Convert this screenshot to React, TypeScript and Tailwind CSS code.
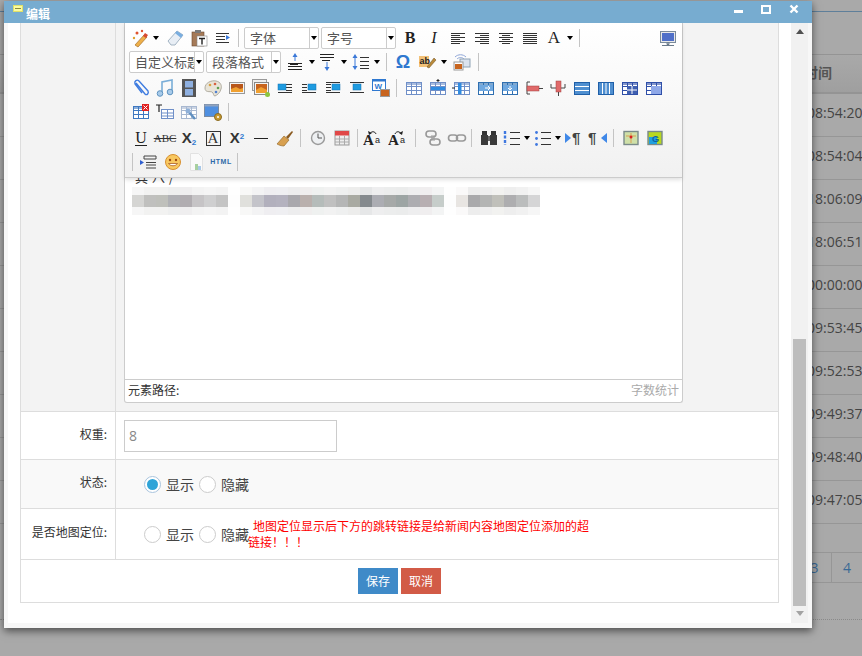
import type { ReactNode } from "react";

const blurBlocks = ["#d5d5d3","#c0c0be","#bfc0bb","#b0b1b5","#b1adb1","#c6c4c6","#cfcfd0","#c4c4c4","#fdfdfd","#e0e0dc","#c4c4ca","#b2b0bd","#b4b2bf","#a9a8ad","#bab0ad","#b5bcba","#c0c0c0","#b5b6b6","#a9aaa2","#858a8e","#acadb3","#a6a9a8","#9da5a4","#adadb1","#b8afb2","#c6cdca","#fdfdfd","#e8e5e2","#a9a9ab","#b4b5b4","#c0c0ba","#aeaeb0","#bbbdbd","#d5d5d6"];

const times = ["08:54:20", "08:54:04", "18:06:09", "18:06:51", "00:00:00", "09:53:45", "09:52:53", "09:49:37", "09:48:40", "09:47:05"];

function Svg({ children }: { children: ReactNode }) {
  return (
    <svg viewBox="0 0 20 20" className="h-5 w-5" fill="none">
      {children}
    </svg>
  );
}

function Lines({ ys, x1 = 3, x2 = 17, color = "#333" }: { ys: number[]; x1?: number; x2?: number; color?: string }) {
  return (
    <>
      {ys.map((y) => (
        <line key={y} x1={x1} x2={x2} y1={y + 0.5} y2={y + 0.5} stroke={color} />
      ))}
    </>
  );
}

// grid table icon, children draw the highlighted part
function TableIcon({ color = "#6f8fc8", children }: { color?: string; children?: ReactNode }) {
  return (
    <Svg>
      <rect x="2.5" y="4.5" width="15" height="12" fill="#fff" stroke={color} />
      <rect x="3" y="5" width="14" height="2" fill={color} opacity="0.6" />
      <path d="M7.5 5v11M12.5 5v11M3 8.5h14M3 12.5h14" stroke={color} />
      {children}
    </Svg>
  );
}

function ImgAlign({ x, top = [], side = [], sideX = [11, 17], bottom = [] }: { x: number; top?: number[]; side?: number[]; sideX?: number[]; bottom?: number[] }) {
  return (
    <Svg>
      <Lines ys={top} x1={3} x2={17} />
      <Lines ys={side} x1={sideX[0]} x2={sideX[1]} />
      <Lines ys={bottom} x1={3} x2={17} />
      <rect x={x} y="6" width="8" height="6" fill="#1e9be0" stroke="#1672b0" strokeWidth="0.5" />
    </Svg>
  );
}

function Letter({ children, className }: { children: ReactNode; className: string }) {
  return <span className={className}>{children}</span>;
}

const icons: Record<string, ReactNode> = {
  wand: (
    <Svg>
      <path d="M4 17l9-10 3 2-9 10z" fill="#eeb04a" stroke="#a8702a" strokeWidth="0.7" />
      <path d="M12 8l2-3 3 2-2 3z" fill="#d84a30" />
      <circle cx="6" cy="5" r="1.5" fill="#e0532f" />
      <circle cx="3" cy="10" r="1.2" fill="#e0a02f" />
      <circle cx="11" cy="3" r="1.2" fill="#e0532f" />
    </Svg>
  ),
  eraser: (
    <Svg>
      <path d="M3 13l9-10 6 4-8 10H6z" fill="#e8eef5" stroke="#8fa3b5" strokeWidth="0.8" />
      <path d="M10 5l2-2 6 4-2 3z" fill="#79aee0" />
    </Svg>
  ),
  paste: (
    <Svg>
      <rect x="3" y="4" width="12" height="14" fill="#a57a58" stroke="#6b4a30" strokeWidth="0.6" />
      <rect x="6" y="2" width="6" height="3" fill="#7a7a7a" />
      <rect x="8" y="8" width="10" height="10" fill="#fff" stroke="#888" strokeWidth="0.6" />
      <path d="M10 10.5h6M13 10.5v6" stroke="#222" strokeWidth="1.4" />
    </Svg>
  ),
  indent: (
    <Svg>
      <Lines ys={[5, 14]} x2={16} />
      <Lines ys={[8, 11]} x2={12} />
      <path d="M13 7l4 2.5-4 2.5z" fill="#3a78d8" />
    </Svg>
  ),
  alignLeft: <Svg><Lines ys={[5, 9, 13]} x2={17} /><Lines ys={[7, 11, 15]} x2={12} /></Svg>,
  alignRight: <Svg><Lines ys={[5, 9, 13]} x1={3} /><Lines ys={[7, 11, 15]} x1={8} /></Svg>,
  alignCenter: <Svg><Lines ys={[5, 9, 13]} /><Lines ys={[7, 11, 15]} x1={6} x2={14} /></Svg>,
  justify: <Svg><Lines ys={[5, 7, 9, 11, 13, 15]} /></Svg>,
  monitor: (
    <Svg>
      <rect x="2.5" y="3.5" width="15" height="11" fill="#e8e8e8" stroke="#7a8a9a" />
      <rect x="4" y="5" width="12" height="8" fill="#4f6fc8" />
      <path d="M9 15h2v1.5H9zM4 17.5h12" stroke="#6a7a8a" />
    </Svg>
  ),
  spaceTop: (
    <Svg>
      <path d="M9 1l2.5 4h-5z" fill="#3a78d8" />
      <line x1="9" x2="9" y1="4" y2="9" stroke="#3a78d8" />
      <Lines ys={[11, 14, 17]} x1={2} x2={16} color="#222" />
      <Lines ys={[12]} x1={4} x2={12} color="#222" />
    </Svg>
  ),
  spaceBottom: (
    <Svg>
      <Lines ys={[2, 5]} x1={2} x2={16} color="#222" />
      <Lines ys={[8]} x1={4} x2={12} color="#222" />
      <line x1="9" x2="9" y1="10" y2="15" stroke="#3a78d8" />
      <path d="M9 19l2.5-4h-5z" fill="#3a78d8" />
    </Svg>
  ),
  lineHeight: (
    <Svg>
      <path d="M4 2l2.5 4h-5zM4 18l2.5-4h-5z" fill="#3a78d8" />
      <line x1="4" x2="4" y1="5" y2="15" stroke="#3a78d8" />
      <Lines ys={[5, 9, 13, 16]} x1={9} x2={18} />
    </Svg>
  ),
  omega: <Letter className="font-['Liberation_Sans'] text-[18px] font-bold text-[#2f78d0]">Ω</Letter>,
  abPen: (
    <Svg>
      <rect x="1" y="4" width="10" height="11" fill="#f2c178" />
      <text x="1.5" y="12" fontSize="9" fontWeight="700" fill="#222" fontFamily="Liberation Sans">ab</text>
      <path d="M9 15l7-9 2 2-7 8z" fill="#b98a3a" stroke="#6a4a1a" strokeWidth="0.5" />
    </Svg>
  ),
  wifiImg: (
    <Svg>
      <path d="M3 5c3-3 8-3 11 0M5 7c2-2 5-2 7 0" stroke="#8fa6d8" />
      <rect x="8" y="7" width="10" height="8" fill="#dbe3ef" stroke="#8fa3b5" />
      <rect x="2" y="10" width="9" height="8" fill="#fff" stroke="#999" />
      <rect x="3" y="12" width="7" height="5" fill="#c8641e" />
    </Svg>
  ),
  clip: (
    <Svg>
      <path d="M5 5l9 11c2 2 4-1 3-3L8 3C6 1 3 3 4 6l7 9" stroke="#3f7ce0" strokeWidth="1.4" />
    </Svg>
  ),
  music: (
    <Svg>
      <path d="M7 15V4l10-2v12" stroke="#7aaed8" strokeWidth="1.6" />
      <circle cx="5" cy="15.5" r="2.8" fill="#a8cbea" stroke="#5f93c0" />
      <circle cx="15" cy="14" r="2.8" fill="#a8cbea" stroke="#5f93c0" />
    </Svg>
  ),
  film: (
    <Svg>
      <rect x="3" y="1" width="14" height="18" fill="#555" />
      <rect x="6" y="3" width="8" height="6.5" fill="#8fb0e0" />
      <rect x="6" y="11" width="8" height="6.5" fill="#8fb0e0" />
    </Svg>
  ),
  palette: (
    <Svg>
      <path d="M2 10c0-5 6-8 11-7 5 1 6 5 5 8-1 4-4 6-6 7-2 0-1-3-3-4-2-1-7 1-7-4z" fill="#e8e4d8" stroke="#b0aca0" />
      <circle cx="7" cy="7" r="1.3" fill="#d8a040" />
      <circle cx="12" cy="6" r="1.3" fill="#d86040" />
      <circle cx="15" cy="10" r="1.3" fill="#60a050" />
      <circle cx="13" cy="14" r="1.3" fill="#5080d0" />
    </Svg>
  ),
  image: (
    <Svg>
      <rect x="2.5" y="4.5" width="15" height="11" fill="#f4f4f4" stroke="#999" />
      <rect x="4" y="6" width="12" height="8" fill="#b8561a" />
      <path d="M4 11l5-2 4 2 3-1v4H4z" fill="#f0a030" />
    </Svg>
  ),
  multiImage: (
    <Svg>
      <rect x="1.5" y="1.5" width="14" height="11" fill="#eee" stroke="#999" />
      <rect x="3.5" y="4.5" width="14" height="12" fill="#f4f4f4" stroke="#888" />
      <rect x="5" y="6" width="11" height="9" fill="#c8641e" />
      <path d="M5 12l5-3 6 3v3H5z" fill="#f0a030" />
      <circle cx="16.5" cy="16.5" r="2.5" fill="#8cc63f" />
    </Svg>
  ),
  imgLeft: <ImgAlign x={3} side={[6, 9, 12]} bottom={[14]} />,
  imgRight: <ImgAlign x={9} side={[6, 9, 12]} sideX={[3, 8]} bottom={[14]} />,
  imgCenter: <ImgAlign x={9} side={[6, 9, 12]} sideX={[3, 8]} top={[4]} bottom={[14]} />,
  imgNone: <ImgAlign x={6} top={[4]} bottom={[14]} />,
  word: (
    <Svg>
      <rect x="1.5" y="1.5" width="13" height="11" fill="#fff" stroke="#2f78d0" />
      <rect x="1.5" y="1.5" width="13" height="2" fill="#2f78d0" />
      <text x="3.5" y="11" fontSize="8" fontWeight="700" fill="#2f78d0" fontFamily="Liberation Sans">W</text>
      <rect x="9.5" y="11.5" width="9" height="7" fill="#c8641e" stroke="#999" />
    </Svg>
  ),
  table: <TableIcon />,
  insRow: (
    <TableIcon>
      <rect x="3" y="9" width="14" height="3" fill="#2f8be0" />
      <path d="M10 1v3M8.5 2.5h3" stroke="#222" />
    </TableIcon>
  ),
  insCol: (
    <TableIcon>
      <rect x="6" y="5" width="3.5" height="11" fill="#2f8be0" />
      <path d="M0 10h3" stroke="#222" />
    </TableIcon>
  ),
  mergeRight: (
    <TableIcon color="#2f6fb0">
      <rect x="3" y="7" width="14" height="6" fill="#6fa8e0" />
      <path d="M9 10h5M12 8l2 2-2 2" stroke="#fff" />
    </TableIcon>
  ),
  mergeDown: (
    <TableIcon color="#2f6fb0">
      <rect x="3" y="7" width="14" height="6" fill="#6fa8e0" />
      <path d="M10 8v4M8 10l2 2 2-2" stroke="#fff" />
    </TableIcon>
  ),
  splitRow: (
    <Svg>
      <path d="M6 4H3v12h3" stroke="#444" />
      <rect x="3" y="8" width="12" height="5" fill="#e06a6a" stroke="#a04040" strokeWidth="0.5" />
      <path d="M15 10.5h4" stroke="#444" />
    </Svg>
  ),
  splitCol: (
    <Svg>
      <path d="M3 6v4h14V6" stroke="#444" />
      <rect x="8" y="3" width="5" height="11" fill="#e06a6a" stroke="#a04040" strokeWidth="0.5" />
      <path d="M10.5 14v4" stroke="#444" />
    </Svg>
  ),
  distRow: (
    <TableIcon color="#1f5fa8">
      <rect x="3" y="5" width="14" height="11" fill="#4f8fd0" />
      <path d="M3 8.5h14M3 12.5h14" stroke="#fff" />
    </TableIcon>
  ),
  distCol: (
    <TableIcon color="#1f5fa8">
      <rect x="3" y="5" width="14" height="11" fill="#4f8fd0" />
      <path d="M6.5 5v11M10 5v11M13.5 5v11" stroke="#fff" />
    </TableIcon>
  ),
  splitAll: (
    <TableIcon color="#2f4fa8">
      <rect x="7" y="8" width="10" height="8" fill="#3f5fb0" />
      <path d="M12 8v8M7 12h10" stroke="#fff" />
    </TableIcon>
  ),
  cellProps: (
    <TableIcon color="#2f4fa8">
      <rect x="7" y="8" width="10" height="8" fill="#8fa8e8" />
    </TableIcon>
  ),
  delTable: (
    <TableIcon color="#3f78c0">
      <rect x="11" y="2" width="7" height="7" fill="#e02020" />
      <path d="M12.5 3.5l4 4M16.5 3.5l-4 4" stroke="#fff" />
    </TableIcon>
  ),
  tableTitle: (
    <Svg>
      <path d="M1 3h6M4 3v7" stroke="#222" strokeWidth="1.2" />
      <rect x="6.5" y="7.5" width="12" height="9" fill="#fff" stroke="#6f8fc8" />
      <path d="M12.5 8v8M7 11h11M7 14h11" stroke="#6f8fc8" />
    </Svg>
  ),
  tableWrench: (
    <TableIcon color="#a8b8d0">
      <path d="M9 9l7 8" stroke="#5f8fc0" strokeWidth="2.4" />
      <circle cx="9" cy="9" r="2.5" fill="#8fb0d8" />
    </TableIcon>
  ),
  imgGear: (
    <Svg>
      <rect x="1.5" y="2.5" width="14" height="12" fill="#4f8fe0" stroke="#7a8aa0" />
      <rect x="1.5" y="2.5" width="14" height="2" fill="#8fa3c0" />
      <circle cx="15" cy="15" r="3.5" fill="#c89a30" stroke="#8a6a20" />
      <circle cx="15" cy="15" r="1" fill="#fff" />
    </Svg>
  ),
  underline: <Letter className="border-b border-[#222] font-['Liberation_Serif'] text-[16px] leading-[15px] text-[#222]">U</Letter>,
  strike: <Letter className="font-['Liberation_Serif'] text-[11px] text-[#333] line-through">ABC</Letter>,
  sub: <Letter className="font-['Liberation_Sans'] text-[15px] font-bold text-[#333]">X<sub className="text-[8px] text-[#2f78d0]">2</sub></Letter>,
  boxA: <Letter className="flex h-[15px] w-[15px] items-center justify-center border border-[#333] font-['Liberation_Serif'] text-[15px] text-[#333]">A</Letter>,
  sup: <Letter className="font-['Liberation_Sans'] text-[15px] font-bold text-[#333]">X<sup className="text-[8px] text-[#2f78d0]">2</sup></Letter>,
  hr: <Svg><line x1="3" x2="17" y1="10.5" y2="10.5" stroke="#222" /></Svg>,
  brush: (
    <Svg>
      <path d="M11 9l6-6 1 1-5 7z" fill="#8a5a20" />
      <path d="M2 16l7-8 5 4-5 6c-3 0-5-1-7-2z" fill="#d8a050" stroke="#8a6020" strokeWidth="0.6" />
    </Svg>
  ),
  clock: (
    <Svg>
      <circle cx="10" cy="10" r="6.5" fill="#eef0f2" stroke="#9a9a9a" strokeWidth="1.4" />
      <path d="M10 5.5V10h4" stroke="#555" />
    </Svg>
  ),
  calendar: (
    <Svg>
      <rect x="3" y="3" width="14" height="14" fill="#eee" stroke="#999" />
      <rect x="3" y="3" width="14" height="4.5" fill="#e04848" />
      <path d="M3 11h14M3 14h14M7.5 8v9M12.5 8v9" stroke="#aaa" />
    </Svg>
  ),
  ltrA: (
    <Svg>
      <text x="0" y="17" fontSize="15" fontWeight="700" fill="#222" fontFamily="Liberation Serif">A</text>
      <text x="12" y="15" fontSize="9" fill="#222" fontFamily="Liberation Sans">a</text>
      <path d="M7 6c1-3 5-3 6 0" stroke="#222" />
      <path d="M5 3l1 4 3-2z" fill="#222" />
    </Svg>
  ),
  rtlA: (
    <Svg>
      <text x="0" y="17" fontSize="15" fontWeight="700" fill="#222" fontFamily="Liberation Serif">A</text>
      <text x="12" y="15" fontSize="9" fill="#222" fontFamily="Liberation Sans">a</text>
      <path d="M7 6c1-3 5-3 6 0" stroke="#222" />
      <path d="M15 3l-1 4-3-2z" fill="#222" />
    </Svg>
  ),
  link: (
    <Svg>
      <rect x="3" y="3" width="10" height="6" rx="3" stroke="#999" strokeWidth="1.6" />
      <rect x="7" y="11" width="10" height="6" rx="3" stroke="#999" strokeWidth="1.6" />
      <path d="M9 7v6M11 7v6" stroke="#999" />
    </Svg>
  ),
  unlink: (
    <Svg>
      <rect x="1.5" y="7" width="9" height="6" rx="3" stroke="#999" strokeWidth="1.6" />
      <rect x="9.5" y="7" width="9" height="6" rx="3" stroke="#999" strokeWidth="1.6" />
    </Svg>
  ),
  binoculars: (
    <Svg>
      <rect x="3" y="3" width="5" height="4" fill="#333" />
      <rect x="12" y="3" width="5" height="4" fill="#333" />
      <rect x="2" y="7" width="7" height="10" fill="#3a3a3a" />
      <rect x="11" y="7" width="7" height="10" fill="#3a3a3a" />
      <rect x="9" y="8" width="2" height="5" fill="#666" />
    </Svg>
  ),
  ol: (
    <Svg>
      <path d="M3 3v14" stroke="#3f78e0" strokeWidth="2.4" strokeDasharray="3 1.5" />
      <Lines ys={[4, 10, 16]} x1={8} x2={18} />
    </Svg>
  ),
  ul: (
    <Svg>
      <circle cx="3.5" cy="4.5" r="1.4" fill="#3f78e0" />
      <circle cx="3.5" cy="10.5" r="1.4" fill="#3f78e0" />
      <circle cx="3.5" cy="16.5" r="1.4" fill="#3f78e0" />
      <Lines ys={[4, 10, 16]} x1={8} x2={18} />
    </Svg>
  ),
  ltr: (
    <Svg>
      <path d="M1 5l6 5-6 5z" fill="#3f88e8" />
      <text x="8" y="15" fontSize="15" fontWeight="700" fill="#444" fontFamily="Liberation Sans">¶</text>
    </Svg>
  ),
  rtl: (
    <Svg>
      <text x="0" y="15" fontSize="15" fontWeight="700" fill="#444" fontFamily="Liberation Sans">¶</text>
      <path d="M19 5l-6 5 6 5z" fill="#3f88e8" />
    </Svg>
  ),
  map: (
    <Svg>
      <rect x="3" y="3.5" width="14" height="13" fill="#cfe0a8" stroke="#7a8a8a" strokeWidth="1.4" />
      <path d="M5 8h10M10 5v10" stroke="#d8a050" />
      <circle cx="10" cy="9" r="1.5" fill="#d82020" />
    </Svg>
  ),
  gmap: (
    <Svg>
      <rect x="3" y="3.5" width="14" height="13" fill="#b8d820" stroke="#7a8a8a" strokeWidth="1.4" />
      <path d="M4 9h8v7H4z" fill="#20a0e0" />
      <text x="7" y="14" fontSize="9" fontWeight="700" fill="#1060a0" fontFamily="Liberation Sans">G</text>
    </Svg>
  ),
  pageBreak: (
    <Svg>
      <path d="M5 4h12v3H5zM7 13h10M7 16h10" stroke="#444" />
      <path d="M1 8l4 2.5L1 13z" fill="#2f5fd0" />
      <path d="M7 10.5h10" stroke="#444" />
    </Svg>
  ),
  smile: (
    <Svg>
      <circle cx="10" cy="10" r="7.5" fill="#f8c860" stroke="#d89030" />
      <circle cx="7" cy="8" r="1.2" fill="#a04a10" />
      <circle cx="13" cy="8" r="1.2" fill="#a04a10" />
      <path d="M5.5 11.5c2 3 7 3 9 0z" fill="#fff" stroke="#a04a10" strokeWidth="0.7" />
    </Svg>
  ),
  file: (
    <Svg>
      <path d="M3.5 1.5h8l4 4v13h-12z" fill="#fafafa" stroke="#e2e2e2" />
      <rect x="8" y="12" width="3" height="6" fill="#a8d0a0" />
      <rect x="11" y="14" width="3" height="4" fill="#a8c8e8" />
    </Svg>
  ),
  html: <Letter className="font-['Liberation_Sans'] text-[7px] font-bold tracking-[0.5px] text-[#2f6aa8]">HTML</Letter>,
};

function Tool({ name, className = "w-6" }: { name: string; className?: string }) {
  return <div className={`flex h-6 shrink-0 items-center justify-center ${className}`}>{icons[name]}</div>;
}

function Caret({ className = "w-2" }: { className?: string }) {
  return (
    <div className={`flex h-6 shrink-0 items-center justify-center ${className}`}>
      <div className="h-0 w-0 border-x-[3px] border-t-[4px] border-x-transparent border-t-black" />
    </div>
  );
}

function Sep({ className = "" }: { className?: string }) {
  return <div className={`h-[18px] w-px shrink-0 bg-[#c4c4c4] ${className}`} />;
}

function Combo({ label, className }: { label: string; className: string }) {
  return (
    <div className={`flex h-[22px] w-[75px] shrink-0 rounded-[2px] border border-[#ccc] bg-white text-[13px] leading-[19px] text-[#555] ${className}`}>
      <span className="flex-1 overflow-hidden whitespace-nowrap pl-[5px]">{label}</span>
      <div className="flex w-[9px] items-center justify-center border-l border-[#ccc]">
        <div className="h-0 w-0 border-x-[3px] border-t-[4px] border-x-transparent border-t-black" />
      </div>
    </div>
  );
}

function ToolRow({ children, className = "" }: { children: ReactNode; className?: string }) {
  return <div className={`flex h-6 items-center ${className}`}>{children}</div>;
}

function Toolbar() {
  return (
    <div className="flex h-[155px] flex-col border-b border-[#ccc] bg-gradient-to-b from-white to-[#f1f1f1] pt-[3px] shadow-[0_2px_4px_rgba(0,0,0,0.12)]">
      <ToolRow className="pl-[5px]">
        <Tool name="wand" className="w-[22px]" />
        <Caret />
        <Tool name="eraser" className="ml-[3px] w-6" />
        <Tool name="paste" />
        <Tool name="indent" />
        <Sep className="ml-[3px]" />
        <Combo label="字体" className="ml-[5px]" />
        <Combo label="字号" className="ml-[2px]" />
        <div className="ml-[2px] w-6 text-center font-['Liberation_Serif'] text-[16px] font-bold text-[#222]">B</div>
        <div className="w-6 text-center font-['Liberation_Serif'] text-[16px] italic text-[#222]">I</div>
        <Tool name="alignLeft" />
        <Tool name="alignRight" />
        <Tool name="alignCenter" />
        <Tool name="justify" />
        <div className="w-6 text-center font-['Liberation_Serif'] text-[17px] text-[#222]">A</div>
        <Caret />
        <Sep className="ml-[5px]" />
        <Tool name="monitor" className="ml-auto mr-[2px] w-6" />
      </ToolRow>
      <ToolRow className="pl-[4px]">
        <Combo label="自定义标题" className="" />
        <Combo label="段落格式" className="ml-[2px]" />
        <Tool name="spaceTop" className="ml-[3px] w-6" />
        <Caret />
        <Tool name="spaceBottom" className="w-6" />
        <Caret />
        <Tool name="lineHeight" className="ml-[1px] w-6" />
        <Caret />
        <Sep className="ml-[5px]" />
        <Tool name="omega" className="ml-[4px] w-6" />
        <Tool name="abPen" className="ml-[1px] w-6" />
        <Caret />
        <Tool name="wifiImg" className="ml-[2px] w-6" />
        <Sep className="ml-[4px]" />
      </ToolRow>
      <ToolRow className="mt-[2px] pl-[4px]">
        {["clip", "music", "film", "palette", "image", "multiImage", "imgLeft", "imgRight", "imgCenter", "imgNone", "word"].map((n) => (
          <Tool key={n} name={n} />
        ))}
        <Sep className="ml-[3px]" />
        <Tool name="table" className="ml-[5px] w-6" />
        {["insRow", "insCol", "mergeRight", "mergeDown", "splitRow", "splitCol", "distRow", "distCol", "splitAll", "cellProps"].map((n) => (
          <Tool key={n} name={n} />
        ))}
      </ToolRow>
      <ToolRow className="pl-[4px]">
        {["delTable", "tableTitle", "tableWrench", "imgGear"].map((n) => (
          <Tool key={n} name={n} />
        ))}
        <Sep className="ml-[3px]" />
      </ToolRow>
      <ToolRow className="mt-[2px] pl-[4px]">
        {["underline", "strike", "sub", "boxA", "sup", "hr", "brush"].map((n) => (
          <Tool key={n} name={n} />
        ))}
        <Sep className="ml-[3px]" />
        <Tool name="clock" className="ml-[5px] w-6" />
        <Tool name="calendar" />
        <Sep className="ml-[3px]" />
        <Tool name="ltrA" className="ml-[3px] w-6" />
        <Tool name="rtlA" className="ml-[1px] w-6" />
        <Sep className="ml-[5px]" />
        <Tool name="link" className="ml-[5px] w-6" />
        <Tool name="unlink" />
        <Sep className="ml-[2px]" />
        <Tool name="binoculars" className="ml-[5px] w-6" />
        <Tool name="ol" className="w-[22px]" />
        <Caret />
        <Tool name="ul" className="ml-[1px] w-[22px]" />
        <Caret />
        <Tool name="ltr" className="w-6" />
        <Tool name="rtl" />
        <Sep className="ml-[3px]" />
        <Tool name="map" className="ml-[5px] w-6" />
        <Tool name="gmap" />
      </ToolRow>
      <ToolRow className="pl-[7px]">
        <Sep />
        <Tool name="pageBreak" className="ml-[4px] w-6" />
        <Tool name="smile" />
        <Tool name="file" />
        <Tool name="html" />
        <Sep className="ml-[4px]" />
      </ToolRow>
    </div>
  );
}

function BlurRow({ className }: { className: string }) {
  return (
    <div className={`flex ${className}`}>
      {blurBlocks.map((color, i) => (
        <div key={i} className="w-3 shrink-0" style={{ backgroundColor: color }} />
      ))}
    </div>
  );
}

function Editor() {
  return (
    <div className="ml-2 flex h-[380px] w-[559px] flex-col rounded-b-[3px] border-x border-b border-[#ccc] bg-white">
      <Toolbar />
      <div className="flex-1 overflow-hidden">
        <div className="h-[7px] overflow-hidden pl-[10px]">
          <div className="-mt-[9px] text-[13px] leading-4 tracking-[4px] text-[#333]">其八/</div>
        </div>
        <div className="mt-[2px] pl-[7px]">
          <BlurRow className="h-2 opacity-20" />
          <BlurRow className="h-3" />
          <BlurRow className="h-2 opacity-20" />
        </div>
      </div>
      <div className="flex h-[23px] items-center justify-between border-t border-[#ccc] px-[3px] pb-[2px] text-[12px]">
        <span className="text-[#333]">元素路径:</span>
        <span className="text-[#aaa]">字数统计</span>
      </div>
    </div>
  );
}

function FormRow({ label, children, className = "" }: { label?: string; children: ReactNode; className?: string }) {
  return (
    <div className={`flex border-b border-[#ddd] ${className}`}>
      <div className="flex w-[95px] shrink-0 items-center justify-end border-r border-[#ddd] pr-2 text-[12px] text-[#333]">
        <span className="-mt-[4px]">{label}</span>
      </div>
      <div className="flex flex-1 items-center">{children}</div>
    </div>
  );
}

function Radio({ label, checked = false }: { label: string; checked?: boolean }) {
  return (
    <label className="flex items-center text-[14px] text-[#444]">
      <span className={`flex h-[17px] w-[17px] items-center justify-center rounded-full border ${checked ? "border-[#a9c4de]" : "border-[#ccc]"} bg-white`}>
        {checked ? <span className="h-[11px] w-[11px] rounded-full bg-[#2fa4d8]" /> : null}
      </span>
      <span className="ml-[5px]">{label}</span>
    </label>
  );
}

function Modal() {
  return (
    <div className="absolute left-1 top-px flex h-[627px] w-[808px] flex-col bg-white shadow-[0_3px_8px_rgba(0,0,0,0.55)]">
      <div className="flex h-[22px] shrink-0 items-center bg-[#77acd0] pl-[9px]">
        <div className="-mt-[8px] flex h-[7px] w-[10px] flex-col items-center justify-center border border-[#dfe06a] bg-[#fbfba0]">
          <div className="h-px w-[6px] bg-[#8a8a40]" />
        </div>
        <span className="ml-[3px] mt-[3px] text-[12px] font-bold text-white">编辑</span>
        <div className="ml-auto flex items-center">
          <div className="-mt-[2px] h-[3px] w-[9px] bg-white" />
          <div className="-mt-[6px] ml-[18px] h-[9px] w-[10px] border-2 border-white" />
          <svg viewBox="0 0 10 10" className="-mt-[6px] ml-[18px] mr-[13px] h-[10px] w-[10px]">
            <path d="M1.5 1.5l7 7M8.5 1.5l-7 7" stroke="#fff" strokeWidth="2.4" />
          </svg>
        </div>
      </div>
      <div className="flex min-h-0 flex-1 bg-[#f7f7f7] px-1 pb-[5px]">
        <div className="flex-1 overflow-hidden bg-white pl-3 pr-3">
          <div className="w-[759px] border-x border-b border-[#ddd]">
            <div className="flex h-[389px] border-b border-[#ddd] bg-[#f3f3f3]">
              <div className="w-[95px] shrink-0 border-r border-[#ddd]" />
              <Editor />
            </div>
            <FormRow label="权重:" className="h-[48px]">
              <input
                readOnly
                value="8"
                className="ml-2 h-[32px] w-[213px] border border-[#ccc] bg-white px-1 font-['Open_Sans'] text-[14px] text-[#888] outline-none"
              />
            </FormRow>
            <FormRow label="状态:" className="h-[49px] bg-[#f9f9f9]">
              <div className="ml-7 flex gap-[5px]">
                <Radio label="显示" checked />
                <Radio label="隐藏" />
              </div>
            </FormRow>
            <FormRow label="是否地图定位:" className="h-[51px]">
              <div className="ml-7 flex gap-[5px]">
                <Radio label="显示" />
                <Radio label="隐藏" />
              </div>
              <p className="-ml-px w-[345px] text-[12px] leading-4 text-[#f00] [text-indent:5px]">
                地图定位显示后下方的跳转链接是给新闻内容地图定位添加的超链接！！！
              </p>
            </FormRow>
            <div className="flex h-[42px] items-start justify-center gap-[3px] pt-2">
              <button className="h-[26px] w-10 bg-[#3f8ac8] text-[12px] text-white">保存</button>
              <button className="h-[26px] w-10 bg-[#d25b47] text-[12px] text-white">取消</button>
            </div>
          </div>
        </div>
        <div className="flex w-[17px] shrink-0 flex-col items-center bg-[#f1f1f1]">
          <div className="mt-[6px] h-0 w-0 border-x-[4px] border-b-[5px] border-x-transparent border-b-[#505050]" />
          <div className="mt-[305px] h-[267px] w-[13px] bg-[#bdbdbd]" />
          <div className="mt-[5px] h-0 w-0 border-x-[4px] border-t-[5px] border-x-transparent border-t-[#a3a3a3]" />
        </div>
      </div>
    </div>
  );
}

function PageBehind() {
  return (
    <div className="h-full pt-[11px] font-['Open_Sans','Noto_Sans_CJK_SC',sans-serif] text-[14px] text-[#444]">
      <div className="h-[43px] border-t border-[#5f7f9a]" />
      <div className="flex h-[38px] items-center overflow-hidden border-t border-[#949494] bg-gradient-to-b from-[#a9a9a9] to-[#9f9f9f] pb-[3px] pl-[804px] font-bold whitespace-nowrap text-[#555]">
        时间
      </div>
      <div className="border-t-2 border-[#949494]">
        {times.map((t) => (
          <div key={t} className="flex h-[43px] items-center border-b border-[#969696] pb-[6px] pl-[807px] whitespace-nowrap">
            <span className="w-[55px] overflow-hidden">{t}.</span>
          </div>
        ))}
      </div>
      <div className="mt-[28px] flex h-[31px] pl-[790px] text-[#3a6a96]">
        <div className="flex w-[42px] items-center justify-center border-y border-r border-[#969696] pl-[8px]">3</div>
        <div className="flex w-[30px] items-center justify-center border-y border-[#969696]">4</div>
      </div>
      <div className="mt-[36px] border-t border-dotted border-[#8a8a8a]" />
    </div>
  );
}

export default function App() {
  return (
    <div className="relative h-[656px] w-[862px] overflow-hidden bg-[#a9a9a9] font-['Noto_Sans_CJK_SC',sans-serif]">
      <PageBehind />
      <Modal />
    </div>
  );
}
